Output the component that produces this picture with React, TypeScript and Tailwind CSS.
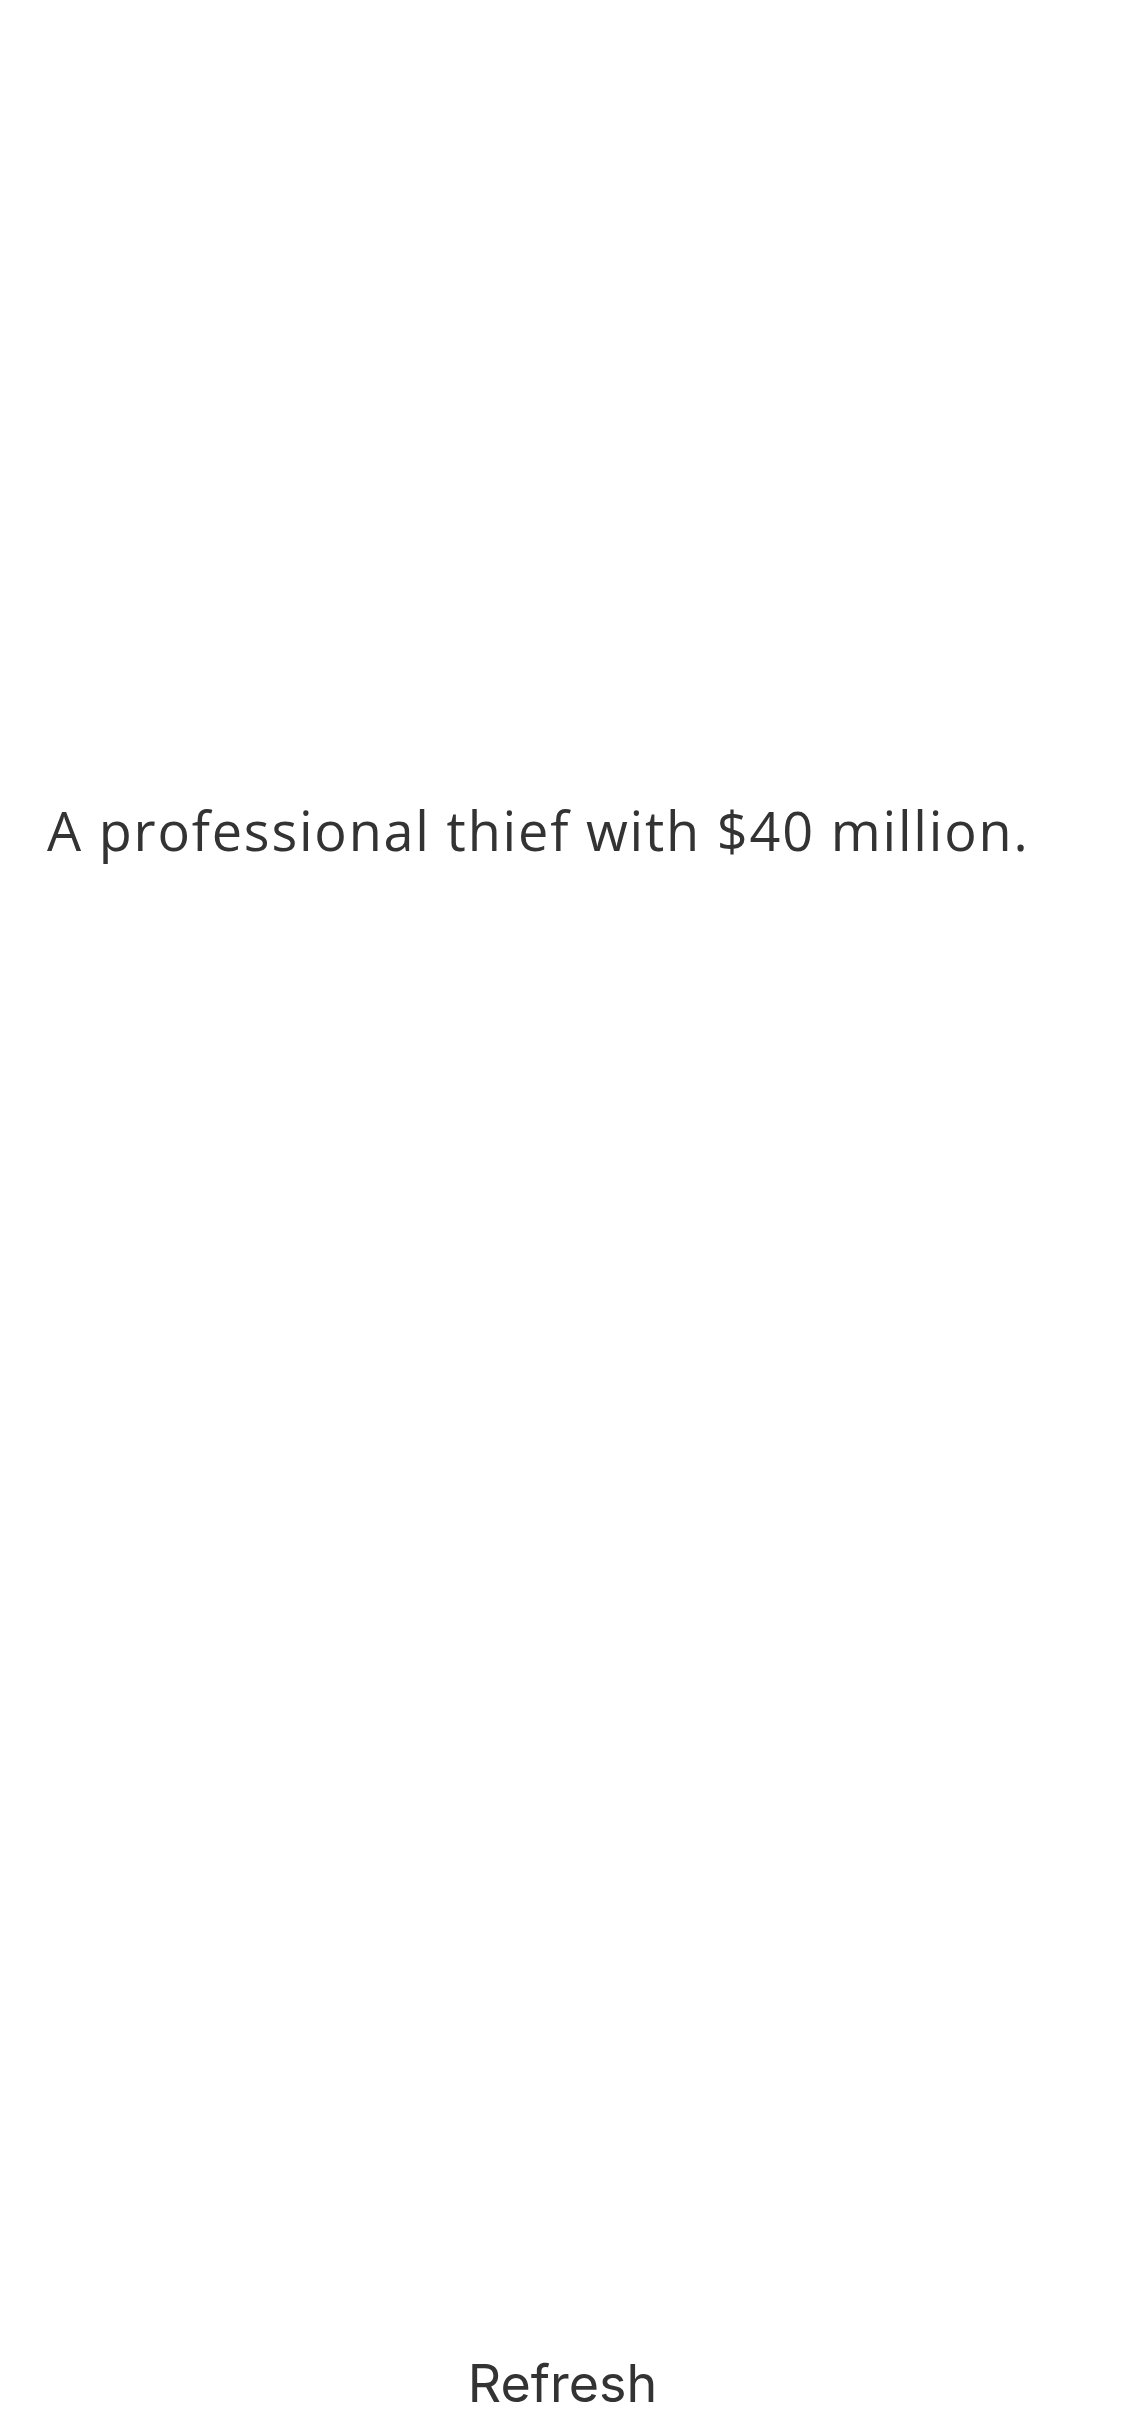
export default function App() {
	return (
		<div className="flex min-h-screen flex-col bg-white text-[#333333]">
			<div className="pt-[798px] pl-[47px]">
				<p className="font-['Open_Sans',sans-serif] text-[54px] font-normal leading-[64px] tracking-[1.8px]">
					A professional thief with $40 million.
				</p>
			</div>
			<div className="flex-1" />
			<div className="flex justify-center pb-[22px]">
				<button className="font-['Inter',sans-serif] text-[52px] leading-[60px] text-[#333333]">
					Refresh
				</button>
			</div>
		</div>
	);
}
